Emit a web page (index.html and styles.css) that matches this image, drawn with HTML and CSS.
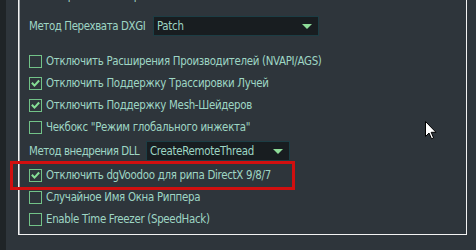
FILE: index.html
```html
<!DOCTYPE html>
<html>
<head>
<meta charset="utf-8">
<link rel="stylesheet" href="styles.css">
</head>
<body>
<div class="page">
  <div class="strip"></div>
  <fieldset class="group">
    <legend class="title">Расширенные Настройки</legend>
    <div class="row combo-row first">
      <span class="label label-dxgi">Метод Перехвата DXGI</span>
      <div class="combo combo-dxgi"><span>Patch</span><i class="arrow"></i></div>
    </div>
    <div class="checks top-checks">
      <label class="check"><span class="box"></span><span>Отключить Расширения Производителей (NVAPI/AGS)</span></label>
      <label class="check"><span class="box on"><svg viewBox="0 0 13 13"><path d="M3 6.5 L5.3 9 L10 3.8" /></svg></span><span>Отключить Поддержку Трассировки Лучей</span></label>
      <label class="check"><span class="box on"><svg viewBox="0 0 13 13"><path d="M3 6.5 L5.3 9 L10 3.8" /></svg></span><span>Отключить Поддержку Mesh-Шейдеров</span></label>
      <label class="check"><span class="box"></span><span>Чекбокс "Режим глобального инжекта"</span></label>
    </div>
    <div class="row combo-row second">
      <span class="label label-dll">Метод внедрения DLL</span>
      <div class="combo combo-dll"><span>CreateRemoteThread</span><i class="arrow"></i></div>
    </div>
    <div class="checks bottom-checks">
      <label class="check"><span class="box on"><svg viewBox="0 0 13 13"><path d="M3 6.5 L5.3 9 L10 3.8" /></svg></span><span>Отключить dgVoodoo для рипа DirectX 9/8/7</span></label>
      <label class="check"><span class="box"></span><span>Случайное Имя Окна Риппера</span></label>
      <label class="check"><span class="box"></span><span>Enable Time Freezer (SpeedHack)</span></label>
    </div>
  </fieldset>
  <div class="highlight"></div>
  <svg class="cursor" viewBox="0 0 12 19" width="12" height="19"><path d="M0.5 0.5 L0.5 15.5 L4 12 L6.5 17.8 L8.6 16.9 L6.2 11.3 L11 11.3 Z" fill="#fff" stroke="#000" stroke-width="1"/></svg>
</div>
</body>
</html>
```
FILE: styles.css
```css
html, body {
  margin: 0;
  padding: 0;
  background: #2e353b;
  width: 476px;
  height: 250px;
  overflow: hidden;
}
.page {
  position: relative;
  width: 476px;
  height: 250px;
  display: flex;
  font-family: "DejaVu Sans Condensed", "DejaVu Sans", sans-serif;
  font-size: 11.4px;
  letter-spacing: -0.3px;
  color: #9ed6c4;
}
.strip {
  width: 6px;
  height: 250px;
  background: #1f2427;
  flex: none;
}
.group {
  margin: -12px 0 0 12px;
  width: 449px;
  height: 247px;
  box-sizing: border-box;
  border: 1px solid #f2f2f2;
  box-shadow: inset 1px 1px 0 #9aa0a4;
  padding: 0 0 0 10px;
  display: flex;
  flex-direction: column;
  min-width: 0;
}
.title {
  padding: 0 2px;
  margin-left: 4px;
  line-height: 14px;
  color: #9ed6c4;
}
.row {
  display: flex;
  align-items: center;
  gap: 6px;
}
.label { flex: none; white-space: nowrap; }
.label-dxgi { width: 118px; letter-spacing: -0.4px; }
.label-dll { width: 111px; letter-spacing: -0.45px; }
.combo-row.first {
  margin-top: 14px;
  height: 20px;
}
.combo {
  height: 20px;
  box-sizing: border-box;
  background: #181d20;
  border: 1px solid #1c3d44;
  display: flex;
  align-items: center;
  padding: 0 3px;
  justify-content: space-between;
  white-space: nowrap;
}
.combo-dxgi { width: 166px; }
.combo-dll { width: 144px; }
.arrow {
  width: 0;
  height: 0;
  border-left: 5px solid transparent;
  border-right: 5px solid transparent;
  border-top: 5px solid #8edc98;
  margin-right: 3px;
}
.checks {
  display: flex;
  flex-direction: column;
}
.top-checks { margin-top: 14px; }
.combo-row.second { height: 20px; margin-top: 3px; }
.bottom-checks { margin-top: 3px; }
.check {
  height: 22px;
  display: flex;
  align-items: center;
  gap: 4px;
  white-space: nowrap;
}
.box {
  width: 13px;
  height: 13px;
  box-sizing: border-box;
  border: 1px solid #72c288;
  flex: none;
  display: flex;
}
.box svg {
  width: 11px;
  height: 11px;
  margin: 0;
}
.box svg path {
  fill: none;
  stroke: #86de95;
  stroke-width: 2.4;
  stroke-linecap: square;
}
.highlight {
  position: absolute;
  left: 10px;
  top: 161px;
  width: 285px;
  height: 29px;
  box-sizing: border-box;
  border: 3px solid #d10f0f;
}
.cursor {
  position: absolute;
  left: 425px;
  top: 121px;
}
```
